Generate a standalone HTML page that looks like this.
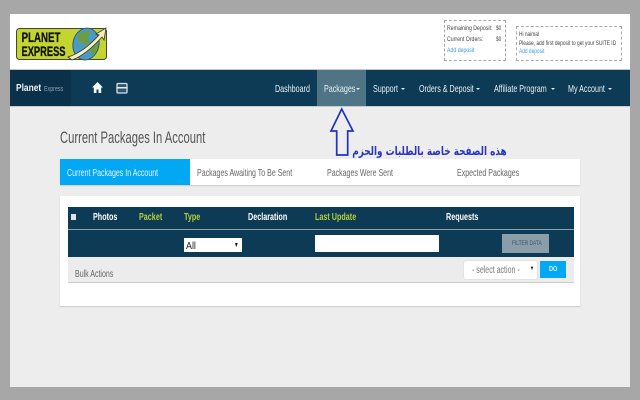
<!DOCTYPE html>
<html lang="en"><head><meta charset="utf-8"><title>Planet Express</title>
<style>
html,body{margin:0;padding:0}
body{width:640px;height:400px;background:#a7a7a7;position:relative;overflow:hidden;font-family:"Liberation Sans",sans-serif}
div,span,a{position:absolute;display:block}
.t{white-space:nowrap;transform:scaleX(.67);transform-origin:0 50%;font-size:10.5px;line-height:12px}
.n{color:#e8f0f3;top:83px;transform:scaleX(.68)}
.c{width:0;height:0;border-left:2px solid transparent;border-right:2px solid transparent;border-top:2.500px solid #e4edf1;top:88px}
.h{top:212px;font-weight:bold;color:#fff;font-size:10px;transform:scaleX(.72)}
.g{color:#b5cf3a}
.tab{top:167px;color:#666}
.box{border:1px dashed #aaa;background:#fff}
.s{font-size:6.500px;line-height:8px;color:#444;transform:scaleX(.74)}
.l{color:#3f9be8}
</style></head><body>
<div style="left:10px;top:14px;width:620px;height:373px;background:#ededed"></div>
<div style="left:10px;top:14px;width:620px;height:55px;background:#fff;border-bottom:1px solid #c4c8ca"></div>

<svg style="position:absolute;left:15px;top:26px" width="94" height="36" viewBox="0 0 94 36">
<rect x="1.500" y="2.500" width="90" height="31" rx="3" fill="#c4d52f" stroke="#444" stroke-width="1"/>
<ellipse cx="71" cy="18" rx="13" ry="16" transform="rotate(12 71 18)" fill="#4a9bc4" stroke="#37596a"/>
<path d="M63 9c4-4 10-5 13-3l-4 6 3 4-4 4-3-3-5-1zM76 20l6-4 1 6-4 7-4-3z" fill="#6c9d43"/>
<path d="M53 31C66 27 76 18 84 9l-3-1 10-6-2 12-2-3C78 21 68 30 57 34z" fill="#f6efbf" stroke="#333" stroke-width=".8"/>
<text x="6.500" y="16" font-size="13.500" font-weight="bold" fill="#111" stroke="#111" stroke-width=".3" textLength="39" lengthAdjust="spacingAndGlyphs">PLANET</text>
<text x="6.500" y="30" font-size="13.500" font-weight="bold" fill="#111" stroke="#111" stroke-width=".3" textLength="44" lengthAdjust="spacingAndGlyphs">EXPRESS</text>
</svg>

<div class="box" style="left:444px;top:20px;width:60px;height:39px"></div>
<span class="t s" style="left:447px;top:25px;transform:scaleX(.8)">Remaining Deposit:</span><span class="t s" style="left:496px;top:25px">$0</span>
<span class="t s" style="left:447px;top:36px;transform:scaleX(.8)">Current Orders:</span><span class="t s" style="left:496px;top:36px">$0</span>
<span class="t s l" style="left:447px;top:47px;transform:scaleX(.8)">Add deposit</span>
<div class="box" style="left:516px;top:26px;width:104px;height:33px"></div>
<span class="t s" style="left:519px;top:31px">Hi naimal</span>
<span class="t s" style="left:519px;top:40px">Please, add first deposit to get your SUITE ID</span>
<span class="t s l" style="left:519px;top:48px">Add deposit</span>

<div style="left:10px;top:70px;width:620px;height:36px;background:#0d3a54"></div>
<div style="left:10px;top:70px;width:61px;height:36px;background:#0a304a"></div>
<div style="left:317px;top:70px;width:49px;height:36px;background:#4f7486"></div>
<div style="left:10px;top:106px;width:620px;height:1px;background:#c9cccd"></div>
<span class="t" style="left:16px;top:82px;color:#eef3f5;font-weight:bold;font-size:10.500px;transform:scaleX(.8)">Planet</span>
<span class="t" style="left:44px;top:83px;color:#8ea5b2;font-size:7.500px;transform:scaleX(.71)">Express</span>
<svg style="position:absolute;left:91px;top:81px" width="13" height="13" viewBox="0 0 13 13"><path d="M6.500 1 1 6.500h1.800V12h2.700V8.500h2V12h2.700V6.500H12z" fill="#f4f7f8"/></svg>
<svg style="position:absolute;left:116px;top:82px" width="12" height="12" viewBox="0 0 12 12"><rect x="1" y="1.500" width="10" height="9.500" rx="1" fill="#2f5570" stroke="#d6e0e6" stroke-width="1.300"/><rect x="1" y="5" width="10" height="1.500" fill="#e6edf1"/></svg>

<span class="t n" style="left:275px">Dashboard</span>
<span class="t n" style="left:324px">Packages</span><span class="c" style="left:356px"></span>
<span class="t n" style="left:373px">Support</span><span class="c" style="left:401px"></span>
<span class="t n" style="left:419px">Orders &amp; Deposit</span><span class="c" style="left:476px"></span>
<span class="t n" style="left:494px">Affiliate Program</span><span class="c" style="left:551px"></span>
<span class="t n" style="left:568px">My Account</span><span class="c" style="left:608px"></span>

<span class="t" style="left:60px;top:129px;font-size:16.500px;line-height:18px;color:#555;transform:scaleX(.68)">Current Packages In Account</span>

<svg style="position:absolute;left:325px;top:105px" width="40" height="55" viewBox="0 0 40 55"><path d="M16.700 4 6 26h5.700v24h11V26H28z" fill="#ededed" stroke="#2230c4" stroke-width="1.700"/></svg>
<span style="right:133px;top:143px;white-space:nowrap;direction:rtl;font:bold 12px/17px 'DejaVu Sans',sans-serif;color:#2a35c0;transform:scaleX(.74);transform-origin:100% 50%">هذه الصفحة خاصة بالطلبات والحزم</span>

<div style="left:60px;top:159px;width:520px;height:26px;background:#fff;box-shadow:0 1px 1px #ccc"></div>
<div style="left:60px;top:159px;width:130px;height:26px;background:#02a8f4"></div>
<span class="t" style="left:67px;top:167px;color:#e6f6fe">Current Packages In Account</span>
<span class="t tab" style="left:197px">Packages Awaiting To Be Sent</span>
<span class="t tab" style="left:327px">Packages Were Sent</span>
<span class="t tab" style="left:457px">Expected Packages</span>

<div style="left:60px;top:196px;width:520px;height:110px;background:#fff;box-shadow:0 1px 1px #ccc"></div>
<div style="left:68px;top:207px;width:506px;height:50px;background:#0d3a54"></div>
<div style="left:68px;top:229px;width:506px;height:1px;background:#8fa3ae"></div>
<div style="left:68px;top:257px;width:506px;height:25px;background:#ececec;border-bottom:1px solid #ccc"></div>
<div style="left:71px;top:214px;width:5px;height:6px;background:#dfe3e6"></div>
<span class="t h" style="left:93px">Photos</span>
<span class="t h g" style="left:139px">Packet</span>
<span class="t h g" style="left:184px">Type</span>
<span class="t h" style="left:248px">Declaration</span>
<span class="t h g" style="left:315px">Last Update</span>
<span class="t h" style="left:446px">Requests</span>

<div style="left:184px;top:238px;width:58px;height:14px;background:#fff"></div>
<span class="t" style="left:186px;top:240px;color:#222;transform:scaleX(.85)">All</span>
<span class="t" style="left:234px;top:240px;color:#111;font-size:7px">&#9660;</span>
<div style="left:315px;top:235px;width:124px;height:17px;background:#fff"></div>
<div style="left:502px;top:234px;width:47px;height:19px;background:#8a9ea9"></div>
<span class="t" style="left:512px;top:238px;color:#3d5260;font-size:6.500px;transform:scaleX(.74)">FILTER DATA</span>

<span class="t" style="left:75px;top:268px;color:#666">Bulk Actions</span>
<div style="left:464px;top:261px;width:73px;height:18px;background:#fff;border-radius:2px;box-shadow:0 0 1px #aaa"></div>
<span class="t" style="left:472px;top:264px;color:#777">- select action -</span>
<span class="t" style="left:530px;top:266px;color:#111;font-size:6px;line-height:7px">&#9660;</span>
<div style="left:540px;top:261px;width:26px;height:17px;background:#02a8f4"></div>
<span class="t" style="left:549px;top:264px;color:#d8f2fe;font-size:7px;font-weight:bold;transform:scaleX(.8)">DO</span>
</body></html>
